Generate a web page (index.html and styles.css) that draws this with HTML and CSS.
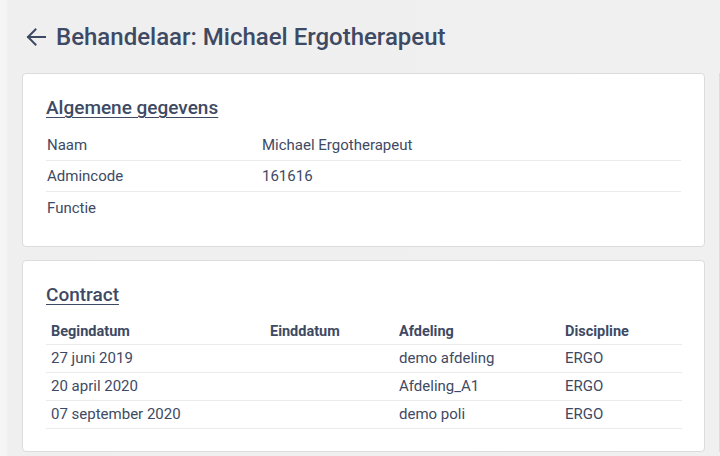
FILE: index.html
```html
<!DOCTYPE html>
<html lang="nl">
<head>
<meta charset="utf-8">
<title>Behandelaar</title>
<link rel="stylesheet" href="styles.css">
</head>
<body>
<div class="page">
  <header class="page-header">
    <svg class="back" width="20" height="18" viewBox="0 0 20 18" aria-hidden="true">
      <path d="M19 9H2M9.5 1.5L2 9l7.5 7.5" fill="none" stroke="#3e4a64" stroke-width="2" stroke-linecap="square" stroke-linejoin="miter"/>
    </svg>
    <h1 class="page-title">Behandelaar: Michael Ergotherapeut</h1>
  </header>
  <main class="grid">
    <section class="card card-general">
      <h2 class="card-title">Algemene gegevens</h2>
      <div class="kv">
        <div class="kv-row"><span class="kv-key">Naam</span><span class="kv-val">Michael Ergotherapeut</span></div>
        <div class="kv-row"><span class="kv-key">Admincode</span><span class="kv-val">161616</span></div>
        <div class="kv-row last"><span class="kv-key">Functie</span><span class="kv-val"></span></div>
      </div>
    </section>
    <aside class="card side"></aside>
    <section class="card card-contract">
      <h2 class="card-title">Contract</h2>
      <table class="tbl">
        <colgroup><col class="c1"><col class="c2"><col class="c3"><col class="c4"></colgroup>
        <thead>
          <tr><th>Begindatum</th><th>Einddatum</th><th>Afdeling</th><th>Discipline</th></tr>
        </thead>
        <tbody>
          <tr><td>27 juni 2019</td><td></td><td>demo afdeling</td><td>ERGO</td></tr>
          <tr><td>20 april 2020</td><td></td><td>Afdeling_A1</td><td>ERGO</td></tr>
          <tr><td>07 september 2020</td><td></td><td>demo poli</td><td>ERGO</td></tr>
        </tbody>
      </table>
    </section>
  </main>
</div>
</body>
</html>
```
FILE: styles.css
```css
* { box-sizing: border-box; }
html, body { margin: 0; padding: 0; }
body {
  width: 720px;
  height: 456px;
  overflow: hidden;
  background: #f0f0f0;
  font-family: Roboto, "Liberation Sans", sans-serif;
  color: #3e4a64;
}
.page {
  background: linear-gradient(to right, #f5f5f5 0, #f5f5f5 6px, #efefef 8px, #f0f0f0 100%);
  height: 456px;
  overflow: hidden;
}
.page-header {
  display: flex;
  align-items: center;
  height: 73px;
  padding: 0 0 0 26px;
}
.back { flex: none; margin-right: 10px; margin-top: 1px; }
.page-title {
  margin: 0;
  font-size: 24px;
  font-weight: 500;
  line-height: 28px;
  color: #3e4a64;
  white-space: nowrap;
}
.grid {
  display: grid;
  grid-template-columns: 683px 1fr;
  column-gap: 14px;
  row-gap: 13px;
  padding-left: 22px;
  align-items: start;
}
.card {
  background: #fff;
  border: 1px solid #dcdcdc;
  border-radius: 4px;
  padding: 22px 23px 22px 23px;
}
.card-general { padding-bottom: 23px; }
.side {
  grid-column: 2;
  grid-row: 1 / span 2;
  align-self: stretch;
  padding: 0;
  border-right: none;
  border-radius: 4px 0 0 4px;
}
.card-contract { padding-bottom: 22px; }
.card-title {
  margin: 0 0 10px 0;
  font-size: 19px;
  font-weight: 500;
  line-height: 24px;
  text-decoration: underline;
  text-decoration-thickness: 1px;
  text-underline-offset: 3px;
  color: #3e4a64;
}
.kv-row {
  display: flex;
  height: 31px;
  align-items: center;
  border-bottom: 1px solid #ebebeb;
  font-size: 15px;
  padding-left: 1px;
}
.kv-row.last { border-bottom: none; }
.kv-key { width: 215px; flex: none; }
.kv-val { flex: 1; }
.tbl {
  width: 636px;
  border-collapse: collapse;
  table-layout: fixed;
  font-size: 15px;
}
.c1 { width: 219px; }
.c2 { width: 129px; }
.c3 { width: 166px; }
.c4 { width: 122px; }
.tbl th, .tbl td {
  text-align: left;
  padding: 0 5px;
  height: 28px;
  border-bottom: 1px solid #ebebeb;
  vertical-align: middle;
}
.tbl th { font-weight: 700; font-size: 14.5px; height: 27px; padding-top: 2px; }
```
